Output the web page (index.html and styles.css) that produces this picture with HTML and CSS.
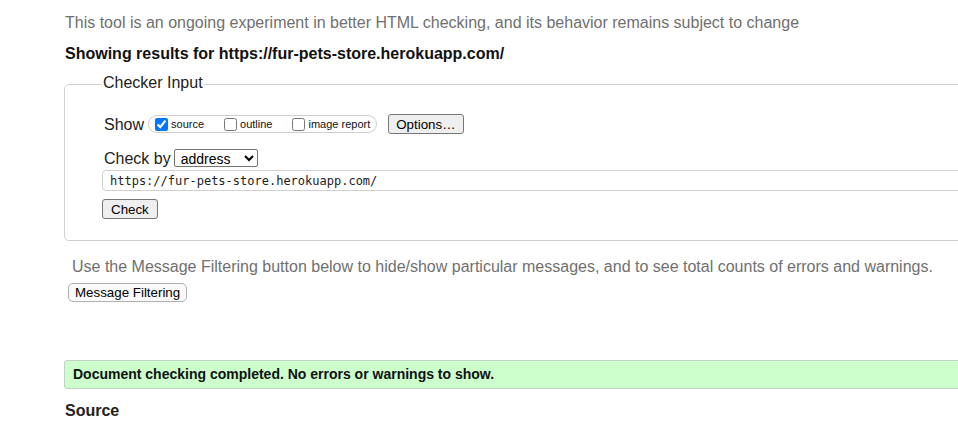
FILE: index.html
```html
<!DOCTYPE html>
<html>
<head>
<meta charset="utf-8">
<title>Nu Html Checker</title>
<link rel="stylesheet" href="styles.css">
</head>
<body>
<div class="page">
  <p class="intro">This tool is an ongoing experiment in better HTML checking, and its behavior remains subject to change</p>
  <p class="results">Showing results for https://fur-pets-store.herokuapp.com/</p>
  <fieldset class="checker">
    <legend>Checker Input</legend>
    <div class="row">
      <span class="lbl">Show</span>
      <span class="pill">
        <label class="opt"><input type="checkbox" checked>source</label>
        <label class="opt"><input type="checkbox">outline</label>
        <label class="opt"><input type="checkbox">image report</label>
      </span>
      <button class="btn opts">Options…</button>
    </div>
    <div class="row by-row">
      <span class="lbl">Check by</span>
      <select class="sel"><option>address</option></select>
    </div>
    <input class="url" type="text" value="https://fur-pets-store.herokuapp.com/">
    <button class="btn check">Check</button>
  </fieldset>
  <p class="note">Use the Message Filtering button below to hide/show particular messages, and to see total counts of errors and warnings.</p>
  <button class="btn soft">Message Filtering</button>
  <div class="success">Document checking completed. No errors or warnings to show.</div>
  <h2 class="source">Source</h2>
</div>
</body>
</html>
```

FILE: styles.css
```css
html, body {
  margin: 0;
  padding: 0;
  overflow: hidden;
  background: #fff;
}
body {
  font-family: "Liberation Sans", Arial, sans-serif;
  color: #222;
}
.page {
  width: 1100px;
  padding-left: 64px;
}
.intro {
  margin: 13px 0 0 1px;
  font-size: 16px;
  line-height: 19px;
  color: #707070;
}
.results {
  margin: 12px 0 0 1px;
  font-size: 16px;
  line-height: 19px;
  font-weight: bold;
  color: #111;
}
.checker {
  margin: 10px 0 0 0;
  padding: 19px 0 21px 37px;
  border: 1px solid #cfcfcf;
  border-radius: 5px;
  min-width: 0;
}
.checker legend {
  padding: 0 1px 3px 1px;
  font-size: 16px;
  line-height: 19px;
  color: #222;
}
.row {
  display: flex;
  align-items: center;
  height: 20px;
}
.by-row {
  margin-top: 14px;
}
.lbl {
  font-size: 16px;
  line-height: 19px;
  color: #222;
  margin-left: 2px;
}
.pill {
  display: flex;
  align-items: center;
  height: 18px;
  box-sizing: border-box;
  margin-left: 4px;
  padding: 0 6px 0 2px;
  border: 1px solid #cfcfcf;
  border-radius: 9px;
  gap: 16px;
}
.opt {
  display: flex;
  align-items: center;
  font-size: 11px;
  color: #111;
}
.opt input {
  width: 13px;
  height: 13px;
  margin: 0 3px 0 4px;
}
.btn {
  font-family: "Liberation Sans", Arial, sans-serif;
  font-size: 13.33px;
  color: #000;
  background: #efefef;
  border: 1px solid #767676;
  border-radius: 3px;
  padding: 0 7px;
  height: 20px;
  box-sizing: border-box;
}
.opts {
  margin-left: 11px;
}
.sel {
  margin-left: 3px;
  width: 84px;
  height: 18px;
  font-family: "Liberation Sans", Arial, sans-serif;
  font-size: 14px;
  padding: 0 0 0 2px;
  border: 1px solid #767676;
  border-radius: 2px;
  background: #fff;
  color: #000;
}
.url {
  display: block;
  box-sizing: border-box;
  width: 1000px;
  height: 21px;
  margin: 2px 0 0 0;
  padding: 0 7px;
  border: 1px solid #d0d0d0;
  border-radius: 4px;
  font-family: "DejaVu Sans Mono", "Liberation Mono", monospace;
  font-size: 12px;
  color: #222;
}
.check {
  display: block;
  margin-top: 8px;
  padding: 0 8px;
}
.note {
  margin: 16px 0 0 8px;
  font-size: 16px;
  line-height: 19px;
  color: #707070;
}
.soft {
  display: block;
  margin: 7px 0 0 4px;
  height: 19px;
  padding: 0 6px;
  background: #fafafa;
  border: 1px solid #b0b0b0;
  border-radius: 5px;
}
.success {
  margin-top: 58px;
  height: 29px;
  box-sizing: border-box;
  padding-left: 8px;
  background: #ccffcc;
  border: 1px solid #c2d2c2;
  border-radius: 3px;
  font-size: 14px;
  line-height: 27px;
  font-weight: bold;
  color: #111;
}
.source {
  margin: 12px 0 0 1px;
  font-size: 16px;
  line-height: 19px;
  font-weight: bold;
  color: #222;
}
```
